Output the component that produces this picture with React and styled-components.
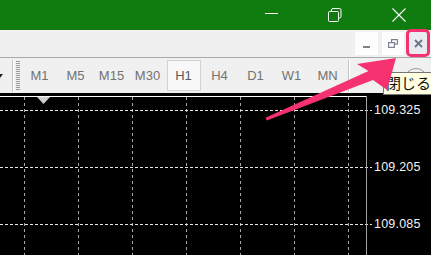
import React from "react";
import styled, { createGlobalStyle } from "styled-components";

const GlobalStyle = createGlobalStyle`
  html, body { margin: 0; padding: 0; }
  body {
    width: 431px;
    height: 255px;
    overflow: hidden;
    background: #000;
    font-family: "Liberation Sans", Arial, sans-serif;
  }
`;

const PINK = "#f5326f";

const Window = styled.div`
  position: relative;
  width: 431px;
  height: 255px;
  display: flex;
  flex-direction: column;
  overflow: hidden;
`;

const TitleBar = styled.div`
  height: 30px;
  flex: none;
  background: #107c10;
  display: flex;
  justify-content: flex-end;
`;

const TitleButton = styled.div`
  width: 64px;
  height: 30px;
  display: flex;
  justify-content: center;
  padding-top: 8px;
  box-sizing: border-box;
`;

const ControlBar = styled.div`
  flex: none;
  height: 25px;
  background: #f0f0f0;
  border-bottom: 1px solid #a9a9a9;
  display: flex;
  justify-content: flex-end;
  align-items: flex-start;
  padding: 2px 1px 0 0;
`;

const MdiButton = styled.div`
  width: ${(p) => p.$w}px;
  height: 23px;
  margin-right: ${(p) => p.$gap}px;
  background: #fdfdfd;
  display: flex;
  align-items: center;
  justify-content: center;
`;

const MdiClose = styled.div`
  width: 24px;
  height: 28px;
  margin-top: -3px;
  box-sizing: border-box;
  border: 3px solid ${PINK};
  border-radius: 5px;
  background: #e8ebf0;
  display: flex;
  align-items: center;
  justify-content: center;
`;

const Toolbar = styled.div`
  height: 35px;
  flex: none;
  background: #f0f0f0;
  display: flex;
  align-items: center;
`;

const DropArrow = styled.div`
  width: 0;
  height: 0;
  margin-left: -3px;
  border-left: 3px solid transparent;
  border-right: 3px solid transparent;
  border-top: 4px solid #222;
`;

const Separator = styled.div`
  width: 1px;
  height: 32px;
  background: #c4c4c4;
  border-right: 1px solid #fff;
  margin-left: ${(p) => p.$left}px;
`;

const Grip = styled.div`
  width: 4px;
  height: 29px;
  margin: 0 2px;
  background: repeating-linear-gradient(
    to bottom,
    #9a9a9a 0 1px,
    transparent 1px 2px
  );
`;

const TfButton = styled.div`
  width: 34px;
  height: 31px;
  margin-left: ${(p) => (p.$first ? 0.5 : 2)}px;
  box-sizing: border-box;
  border: 1px solid ${(p) => (p.$active ? "#d2d2d2" : "transparent")};
  background: ${(p) => (p.$active ? "#f8f8f8" : "transparent")};
  display: flex;
  align-items: center;
  justify-content: center;
  font-size: 13px;
  color: ${(p) => (p.$active ? "#5a5a5a" : "#727272")};
`;

const RoundIcon = styled.div`
  width: 22px;
  height: 22px;
  margin-left: 54px;
  margin-top: 8px;
  border: 1.5px solid #9a9a9a;
  border-radius: 50%;
`;

const Chart = styled.div`
  flex: 1;
  background: #000;
  display: flex;
`;

const Plot = styled.svg`
  display: block;
  flex: none;
`;

const PriceAxis = styled.div`
  display: flex;
  flex-direction: column;
  gap: 43px;
  padding-top: 10px;
`;

const Price = styled.div`
  height: 14px;
  line-height: 14px;
  font-size: 12.5px;
  color: #f2f2f2;
  letter-spacing: 0.2px;
`;

const Tooltip = styled.div`
  position: absolute;
  left: 383px;
  top: 72px;
  width: 60px;
  height: 23px;
  box-sizing: border-box;
  border: 1px solid #767676;
  background: #ffffe1;
  padding-left: 2px;
  font-family: "Noto Sans CJK JP", "Noto Sans", sans-serif;
  font-size: 15px;
  line-height: 20px;
  color: #111;
`;

const Overlay = styled.svg`
  position: absolute;
  left: 0;
  top: 0;
  pointer-events: none;
`;

const frames = ["M1", "M5", "M15", "M30", "H1", "H4", "D1", "W1", "MN"];
const prices = ["109.325", "109.205", "109.085"];
const gridX = [24, 78, 132, 186, 240, 294, 348];
const gridY = [17, 74, 131];

function TitleControls() {
  return (
    <TitleBar>
      <TitleButton>
        <svg width="13" height="13" viewBox="0 0 13 13">
          <line x1="0" y1="5.5" x2="13" y2="5.5" stroke="#fff" strokeWidth="1" />
        </svg>
      </TitleButton>
      <TitleButton>
        <svg width="14" height="14" viewBox="0 0 14 14" fill="none" stroke="#fff" strokeWidth="1">
          <path d="M3.5 3.5 V2 a1.5 1.5 0 0 1 1.5 -1.5 H11.5 a1.5 1.5 0 0 1 1.5 1.5 V8.5 a1.5 1.5 0 0 1 -1.5 1.5 H10.5" />
          <rect x="0.5" y="3.5" width="10" height="10" rx="1" />
        </svg>
      </TitleButton>
      <TitleButton>
        <svg width="14" height="14" viewBox="0 0 14 14" stroke="#fff" strokeWidth="1.1">
          <line x1="0.5" y1="0.5" x2="13.5" y2="13.5" />
          <line x1="13.5" y1="0.5" x2="0.5" y2="13.5" />
        </svg>
      </TitleButton>
    </TitleBar>
  );
}

function ChartControls() {
  return (
    <ControlBar>
      <MdiButton $w={23} $gap={4}>
        <svg width="8" height="8" viewBox="0 0 8 8">
          <rect x="0" y="6" width="7" height="2" fill="#7a8290" />
        </svg>
      </MdiButton>
      <MdiButton $w={22} $gap={2}>
        <svg width="10" height="9" viewBox="0 0 10 9" fill="none" stroke="#7a8290" strokeWidth="1.2">
          <rect x="3.6" y="0.6" width="5.8" height="4.4" />
          <rect x="0.6" y="3.6" width="5.8" height="4.8" fill="#fdfdfd" />
        </svg>
      </MdiButton>
      <MdiClose>
        <svg width="9" height="9" viewBox="0 0 9 9" stroke="#6b7686" strokeWidth="1.8">
          <line x1="1" y1="1" x2="8" y2="8" />
          <line x1="8" y1="1" x2="1" y2="8" />
        </svg>
      </MdiClose>
    </ControlBar>
  );
}

function Periods() {
  return (
    <Toolbar>
      <DropArrow />
      <Separator $left={9} />
      <Grip />
      {frames.map((f, i) => (
        <TfButton key={f} $first={i === 0} $active={f === "H1"}>
          {f}
        </TfButton>
      ))}
      <Separator $left={3} />
      <RoundIcon />
    </Toolbar>
  );
}

function PriceChart() {
  return (
    <Chart>
      <Plot width="374" height="162" viewBox="0 0 374 162">
        {gridX.map((x) => (
          <line
            key={x}
            x1={x + 0.5}
            y1="4"
            x2={x + 0.5}
            y2="162"
            stroke="#a6a6a6"
            strokeDasharray="3 3"
          />
        ))}
        {gridY.map((y) => (
          <line
            key={y}
            x1="0"
            y1={y + 0.5}
            x2="372"
            y2={y + 0.5}
            stroke="#e6e6e6"
            strokeDasharray="3 2"
          />
        ))}
        <line x1="0" y1="3.5" x2="367" y2="3.5" stroke="#ffffff" />
        <line x1="366.5" y1="3" x2="366.5" y2="162" stroke="#a3a3a3" />
        <polygon points="37,4 50,4 43.5,11" fill="#cfcfcf" />
      </Plot>
      <PriceAxis>
        {prices.map((p) => (
          <Price key={p}>{p}</Price>
        ))}
      </PriceAxis>
    </Chart>
  );
}

export default function App() {
  return (
    <>
      <GlobalStyle />
      <Window>
        <TitleControls />
        <ChartControls />
        <Periods />
        <PriceChart />
        <Tooltip>閉じる</Tooltip>
        <Overlay width="431" height="255" viewBox="0 0 431 255">
          <polygon
            points="396,58 357,64 368.5,71 265.5,117.8 266.8,120.4 373,80 387,90"
            fill={PINK}
          />
        </Overlay>
      </Window>
    </>
  );
}
